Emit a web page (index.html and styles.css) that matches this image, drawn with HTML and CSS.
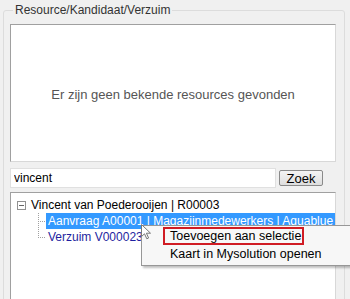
FILE: index.html
```html
<!DOCTYPE html>
<html>
<head>
    <title>Resource/Kandidaat/Verzuim</title>
    <link rel="stylesheet" href="styles.css">
</head>
<body>
    <fieldset class="group">
        <legend>Resource/Kandidaat/Verzuim</legend>

        <div class="results">Er zijn geen bekende resources gevonden</div>

        <div class="search">
            <input type="text" class="search-input" value="vincent">
            <button class="search-btn">Zoek</button>
        </div>

        <div class="tree">
            <div class="node">
                <span class="toggle"></span>
                <span class="label">Vincent van Poederooijen | R00003</span>
            </div>
            <div class="child">
                <span class="branch"></span>
                <span class="label selected">Aanvraag A00001 | Magazijnmedewerkers | Aquablue</span>
            </div>
            <div class="child last">
                <span class="branch"></span>
                <span class="label link">Verzuim V000023</span>
            </div>
        </div>
    </fieldset>

    <div class="menu">
        <div class="menu-item marked">Toevoegen aan selectie</div>
        <div class="menu-item">Kaart in Mysolution openen</div>
    </div>

    <svg class="cursor" width="11" height="16" viewBox="0 0 11 16">
        <path d="M0.5 0.5 L0.5 12.5 L3.5 9.8 L5.8 14.8 L7.6 14 L5.4 9.2 L9.5 9.2 Z" fill="#fff" stroke="#777" stroke-width="1"/>
    </svg>
</body>
</html>
```

FILE: styles.css
```css
body { margin: 0; background: #f0f0f0; font-family: "Liberation Sans", Arial, sans-serif; font-size: 12px; color: #000; overflow: hidden; }

.group { margin: 3px 0 0 3px; width: 323px; height: 330px; padding: 7px 8px 0 6px; border: 1px solid #dcdcdc; border-radius: 3px; box-sizing: content-box; }
.group legend { padding: 0 2px; margin-left: 3px; color: #333; font-size: 12px; }

.results { height: 138px; box-sizing: border-box; padding-top: 3px; background: #fff; border: 1px solid #a0a0a0; border-right-color: #d8d8d8; border-bottom-color: #d8d8d8; display: flex; align-items: center; justify-content: center; color: #555; font-size: 13px; }

.search { display: flex; align-items: center; margin-top: 6px; gap: 3px; }
.search-input { width: 266px; height: 20px; box-sizing: border-box; border: 1px solid #e0e0e0; background: #fff; padding: 0 3px; font-family: inherit; font-size: 12px; color: #000; }
.search-btn { width: 44px; height: 16px; padding: 0; border: 1px solid #8a8a8a; border-radius: 2px; background: linear-gradient(#f4f4f4, #dedede); font-family: inherit; font-size: 13px; line-height: 13px; color: #000; }

.tree { margin-top: 4px; height: 120px; background: #fff; border: 1px solid #a0a0a0; border-right-color: #d8d8d8; padding: 4px 0 0 6px; overflow: hidden; font-size: 12px; }
.node, .child { display: flex; align-items: center; height: 16px; white-space: nowrap; }
.toggle { width: 7px; height: 7px; border: 1px solid #919191; margin-right: 3px; background: linear-gradient(#666, #666) center / 5px 1px no-repeat, #fff; }
.branch { width: 8px; height: 16px; margin-left: 21px; background: repeating-linear-gradient(to bottom, #a0a0a0 0 1px, transparent 1px 2px) left top / 1px 100% no-repeat, repeating-linear-gradient(to right, #a0a0a0 0 1px, transparent 1px 2px) left 50% / 100% 1px no-repeat; }
.child.last .branch { background-size: 1px 50%, 100% 1px; }
.label { padding: 0 2px; line-height: 16px; }
.selected { background: #3399ff; color: #fff; flex: 1; }
.link { color: #1f1fa0; }

.menu { position: absolute; left: 141px; top: 225px; width: 208px; padding: 1px 0 2px; background: #f7f7f7; border: 1px solid #979797; box-shadow: 2px 2px 2px rgba(0, 0, 0, 0.25); font-size: 12.5px; }
.menu-item { height: 18px; line-height: 18px; padding-left: 28px; white-space: nowrap; }
.menu-item.marked { margin-left: 21px; padding-left: 5px; width: 132px; height: 14px; line-height: 14px; border: 2px solid #d01c24; }

.cursor { position: absolute; left: 141px; top: 224px; }
```
